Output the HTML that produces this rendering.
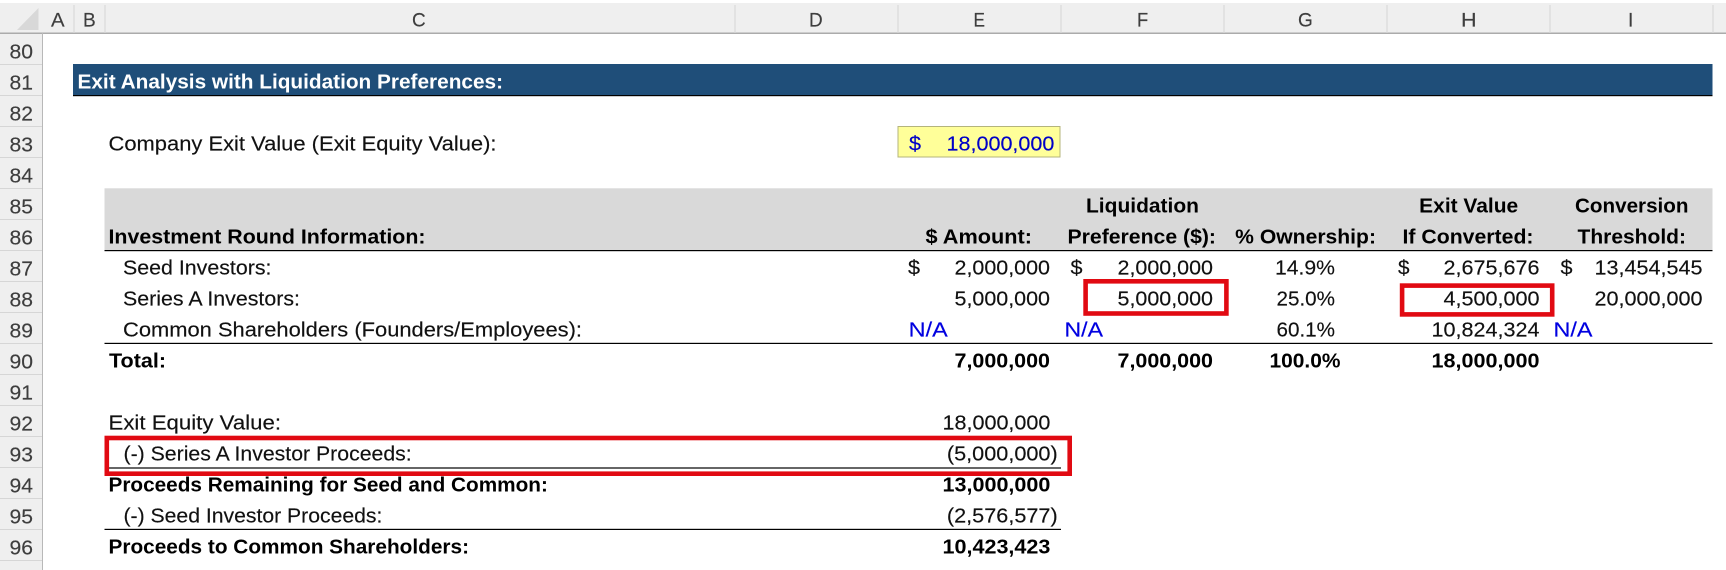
<!DOCTYPE html>
<html lang="en">
<head>
<meta charset="utf-8">
<title>Exit Analysis with Liquidation Preferences</title>
<style>
html,body{margin:0;padding:0;background:#fff;width:1726px;height:570px;overflow:hidden}
svg{display:block;position:absolute;left:0;top:0}
text{font-family:"Liberation Sans",sans-serif;font-size:20px;fill:#111;stroke:#111;stroke-width:.15px}
.b{font-weight:bold;fill:#000;stroke:none}
.h{fill:#3e3e3e;stroke:#3e3e3e;font-size:19px}
.r{fill:#3e3e3e;stroke:#3e3e3e;font-size:20px}
.u{fill:#0000e0;stroke:#0000e0}
.y{fill:#0000c8;stroke:#0000c8}
.w{fill:#fff;stroke:none;font-weight:bold}
</style>
</head>
<body>
<svg width="1726" height="570" viewBox="0 0 1726 570" xmlns="http://www.w3.org/2000/svg">
<rect x="0" y="3" width="1726" height="30" fill="#efefef"/>
<rect x="0" y="33" width="42" height="537" fill="#efefef"/>
<rect x="0" y="32.5" width="1726" height="1.5" fill="#ababab"/>
<rect x="42" y="33" width="1" height="537" fill="#b8b8b8"/>
<polygon points="38.5,8 38.5,30 17,30" fill="#d8d8d8"/>
<g fill="#d6d6d6">
<rect x="73.5" y="5" width="1" height="28"/><rect x="104.5" y="5" width="1" height="28"/><rect x="734.5" y="5" width="1" height="28"/><rect x="897.5" y="5" width="1" height="28"/><rect x="1060.5" y="5" width="1" height="28"/><rect x="1223.5" y="5" width="1" height="28"/><rect x="1386.5" y="5" width="1" height="28"/><rect x="1549.5" y="5" width="1" height="28"/><rect x="1712.5" y="5" width="1" height="28"/>
<rect x="0" y="64" width="42" height="1"/><rect x="0" y="95" width="42" height="1"/><rect x="0" y="126" width="42" height="1"/><rect x="0" y="157" width="42" height="1"/><rect x="0" y="188" width="42" height="1"/><rect x="0" y="219" width="42" height="1"/><rect x="0" y="250" width="42" height="1"/><rect x="0" y="281" width="42" height="1"/><rect x="0" y="312" width="42" height="1"/><rect x="0" y="343" width="42" height="1"/><rect x="0" y="374" width="42" height="1"/><rect x="0" y="405" width="42" height="1"/><rect x="0" y="436" width="42" height="1"/><rect x="0" y="467" width="42" height="1"/><rect x="0" y="498" width="42" height="1"/><rect x="0" y="529" width="42" height="1"/><rect x="0" y="560" width="42" height="1"/>
</g>
<g>
<text class="h" x="51" y="26.5" textLength="13.6" lengthAdjust="spacingAndGlyphs">A</text>
<text class="h" x="83" y="26.5" textLength="12.7" lengthAdjust="spacingAndGlyphs">B</text>
<text class="h" x="412" y="26.5" textLength="13.7" lengthAdjust="spacingAndGlyphs">C</text>
<text class="h" x="809" y="26.5" textLength="13.7" lengthAdjust="spacingAndGlyphs">D</text>
<text class="h" x="973.5" y="26.5" textLength="11.5" lengthAdjust="spacingAndGlyphs">E</text>
<text class="h" x="1137" y="26.5" textLength="11.2" lengthAdjust="spacingAndGlyphs">F</text>
<text class="h" x="1298" y="26.5" textLength="14.8" lengthAdjust="spacingAndGlyphs">G</text>
<text class="h" x="1461" y="26.5" textLength="15.6" lengthAdjust="spacingAndGlyphs">H</text>
<text class="h" x="1628" y="26.5" textLength="5.3" lengthAdjust="spacingAndGlyphs">I</text>
</g>
<g>
<text class="r" x="9.5" y="58.3" textLength="23.5" lengthAdjust="spacingAndGlyphs">80</text>
<text class="r" x="9.5" y="89.3" textLength="23.5" lengthAdjust="spacingAndGlyphs">81</text>
<text class="r" x="9.5" y="120.3" textLength="23.5" lengthAdjust="spacingAndGlyphs">82</text>
<text class="r" x="9.5" y="151.3" textLength="23.5" lengthAdjust="spacingAndGlyphs">83</text>
<text class="r" x="9.5" y="182.3" textLength="23.5" lengthAdjust="spacingAndGlyphs">84</text>
<text class="r" x="9.5" y="213.3" textLength="23.5" lengthAdjust="spacingAndGlyphs">85</text>
<text class="r" x="9.5" y="244.3" textLength="23.5" lengthAdjust="spacingAndGlyphs">86</text>
<text class="r" x="9.5" y="275.3" textLength="23.5" lengthAdjust="spacingAndGlyphs">87</text>
<text class="r" x="9.5" y="306.3" textLength="23.5" lengthAdjust="spacingAndGlyphs">88</text>
<text class="r" x="9.5" y="337.3" textLength="23.5" lengthAdjust="spacingAndGlyphs">89</text>
<text class="r" x="9.5" y="368.3" textLength="23.5" lengthAdjust="spacingAndGlyphs">90</text>
<text class="r" x="9.5" y="399.3" textLength="23.5" lengthAdjust="spacingAndGlyphs">91</text>
<text class="r" x="9.5" y="430.3" textLength="23.5" lengthAdjust="spacingAndGlyphs">92</text>
<text class="r" x="9.5" y="461.3" textLength="23.5" lengthAdjust="spacingAndGlyphs">93</text>
<text class="r" x="9.5" y="492.3" textLength="23.5" lengthAdjust="spacingAndGlyphs">94</text>
<text class="r" x="9.5" y="523.3" textLength="23.5" lengthAdjust="spacingAndGlyphs">95</text>
<text class="r" x="9.5" y="554.3" textLength="23.5" lengthAdjust="spacingAndGlyphs">96</text>
</g>

<rect x="73" y="64" width="1639.5" height="31" fill="#1f4e79"/>
<rect x="73" y="95" width="1639.5" height="1.2" fill="#000"/>
<text class="w" x="77.5" y="88.3" textLength="425.5" lengthAdjust="spacingAndGlyphs">Exit Analysis with Liquidation Preferences:</text>

<text x="108.5" y="150.5" textLength="388" lengthAdjust="spacingAndGlyphs">Company Exit Value (Exit Equity Value):</text>
<rect x="898" y="126.5" width="162" height="30.5" fill="#ffff99" stroke="#b4b47c" stroke-width="1"/>
<text class="y" x="909" y="150.5" textLength="12" lengthAdjust="spacingAndGlyphs">$</text>
<text class="y" x="946.5" y="150.5" textLength="107.9" lengthAdjust="spacingAndGlyphs">18,000,000</text>

<rect x="104.5" y="188.3" width="1608" height="61.7" fill="#d9d9d9"/>
<rect x="104.5" y="250" width="1608" height="1.2" fill="#000"/>
<rect x="104.5" y="342.8" width="1608" height="1.2" fill="#000"/>

<text class="b" x="1086" y="212.6" textLength="113" lengthAdjust="spacingAndGlyphs">Liquidation</text>
<text class="b" x="1419.2" y="212.6" textLength="99" lengthAdjust="spacingAndGlyphs">Exit Value</text>
<text class="b" x="1575" y="212.6" textLength="113.5" lengthAdjust="spacingAndGlyphs">Conversion</text>
<text class="b" x="108.5" y="243.5" textLength="317" lengthAdjust="spacingAndGlyphs">Investment Round Information:</text>
<text class="b" x="925.5" y="243.5" textLength="106.5" lengthAdjust="spacingAndGlyphs">$ Amount:</text>
<text class="b" x="1067.5" y="243.5" textLength="148.5" lengthAdjust="spacingAndGlyphs">Preference ($):</text>
<text class="b" x="1235.2" y="243.5" textLength="140.8" lengthAdjust="spacingAndGlyphs">% Ownership:</text>
<text class="b" x="1402.5" y="243.5" textLength="131" lengthAdjust="spacingAndGlyphs">If Converted:</text>
<text class="b" x="1577.5" y="243.5" textLength="108.5" lengthAdjust="spacingAndGlyphs">Threshold:</text>

<text x="123" y="274.5" textLength="148.5" lengthAdjust="spacingAndGlyphs">Seed Investors:</text>
<text x="908" y="274.5" textLength="12" lengthAdjust="spacingAndGlyphs">$</text>
<text x="954.5" y="274.5" textLength="95.5" lengthAdjust="spacingAndGlyphs">2,000,000</text>
<text x="1070.5" y="274.5" textLength="12" lengthAdjust="spacingAndGlyphs">$</text>
<text x="1117.5" y="274.5" textLength="95.5" lengthAdjust="spacingAndGlyphs">2,000,000</text>
<text x="1275" y="274.5" textLength="60" lengthAdjust="spacingAndGlyphs">14.9%</text>
<text x="1398" y="274.5" textLength="11.5" lengthAdjust="spacingAndGlyphs">$</text>
<text x="1443.5" y="274.5" textLength="96" lengthAdjust="spacingAndGlyphs">2,675,676</text>
<text x="1560.5" y="274.5" textLength="12" lengthAdjust="spacingAndGlyphs">$</text>
<text x="1594.5" y="274.5" textLength="108" lengthAdjust="spacingAndGlyphs">13,454,545</text>

<text x="123" y="305.5" textLength="177" lengthAdjust="spacingAndGlyphs">Series A Investors:</text>
<text x="954.5" y="305.5" textLength="95.5" lengthAdjust="spacingAndGlyphs">5,000,000</text>
<text x="1117.5" y="305.5" textLength="95.5" lengthAdjust="spacingAndGlyphs">5,000,000</text>
<text x="1276.5" y="305.5" textLength="58.5" lengthAdjust="spacingAndGlyphs">25.0%</text>
<text x="1443.5" y="305.5" textLength="96" lengthAdjust="spacingAndGlyphs">4,500,000</text>
<text x="1594.5" y="305.5" textLength="108" lengthAdjust="spacingAndGlyphs">20,000,000</text>

<text x="123" y="336.5" textLength="459" lengthAdjust="spacingAndGlyphs">Common Shareholders (Founders/Employees):</text>
<text class="u" x="908.7" y="336.5" textLength="39" lengthAdjust="spacingAndGlyphs">N/A</text>
<text class="u" x="1064.5" y="336.5" textLength="38.5" lengthAdjust="spacingAndGlyphs">N/A</text>
<text x="1276.5" y="336.5" textLength="58.5" lengthAdjust="spacingAndGlyphs">60.1%</text>
<text x="1431.5" y="336.5" textLength="108" lengthAdjust="spacingAndGlyphs">10,824,324</text>
<text class="u" x="1553.5" y="336.5" textLength="39" lengthAdjust="spacingAndGlyphs">N/A</text>

<text class="b" x="109" y="367.5" textLength="57" lengthAdjust="spacingAndGlyphs">Total:</text>
<text class="b" x="954.5" y="367.5" textLength="95.5" lengthAdjust="spacingAndGlyphs">7,000,000</text>
<text class="b" x="1117.5" y="367.5" textLength="95.5" lengthAdjust="spacingAndGlyphs">7,000,000</text>
<text class="b" x="1269.5" y="367.5" textLength="71" lengthAdjust="spacingAndGlyphs">100.0%</text>
<text class="b" x="1431.5" y="367.5" textLength="108" lengthAdjust="spacingAndGlyphs">18,000,000</text>

<text x="108.5" y="429.5" textLength="172.5" lengthAdjust="spacingAndGlyphs">Exit Equity Value:</text>
<text x="942.5" y="429.5" textLength="107.9" lengthAdjust="spacingAndGlyphs">18,000,000</text>
<text x="123.5" y="460.5" textLength="288.2" lengthAdjust="spacingAndGlyphs">(-) Series A Investor Proceeds:</text>
<text x="946.9" y="460.5" textLength="110.8" lengthAdjust="spacingAndGlyphs">(5,000,000)</text>
<rect x="104.5" y="467.4" width="956.5" height="1.2" fill="#000"/>
<text class="b" x="108.5" y="491.5" textLength="439.4" lengthAdjust="spacingAndGlyphs">Proceeds Remaining for Seed and Common:</text>
<text class="b" x="942.5" y="491.5" textLength="107.9" lengthAdjust="spacingAndGlyphs">13,000,000</text>
<text x="123.5" y="522.5" textLength="258.9" lengthAdjust="spacingAndGlyphs">(-) Seed Investor Proceeds:</text>
<text x="946.9" y="522.5" textLength="110.8" lengthAdjust="spacingAndGlyphs">(2,576,577)</text>
<rect x="104.5" y="528.8" width="956.5" height="1.2" fill="#000"/>
<text class="b" x="108.5" y="553.5" textLength="360.5" lengthAdjust="spacingAndGlyphs">Proceeds to Common Shareholders:</text>
<text class="b" x="942.5" y="553.5" textLength="107.9" lengthAdjust="spacingAndGlyphs">10,423,423</text>

<g fill="none" stroke="#e10a12" stroke-width="4.6">
<rect x="1085.6" y="281.3" width="140.8" height="32.2"/>
<rect x="1402.1" y="285.6" width="150.1" height="28.8"/>
<rect x="106.8" y="438" width="962.9" height="35.7"/>
</g>
</svg>
</body>
</html>
